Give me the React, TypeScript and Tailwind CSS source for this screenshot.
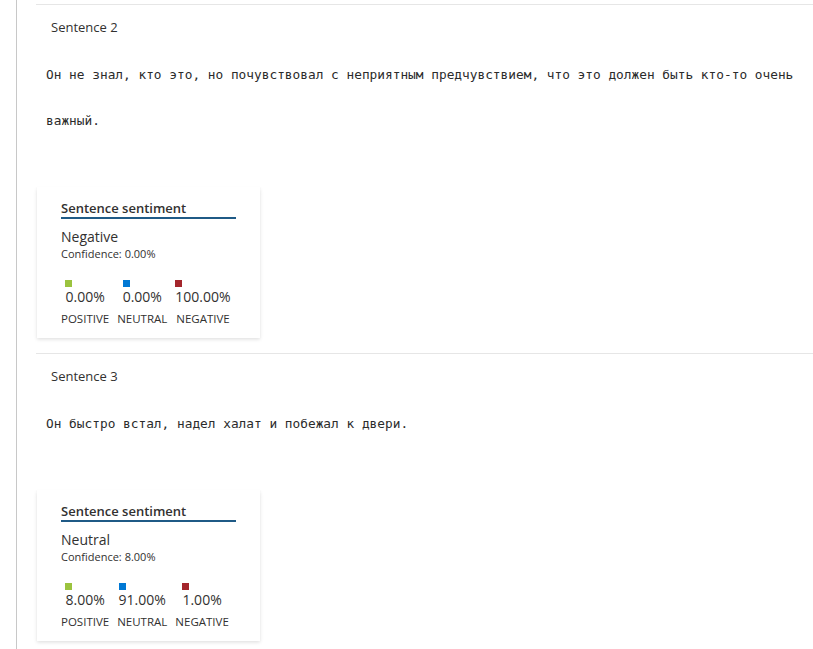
import React from "react";

type Scores = {
  positive: string;
  neutral: string;
  negative: string;
};

type Sentence = {
  index: number;
  text: string;
  label: string;
  confidence: string;
  scores: Scores;
};

const sentences: Sentence[] = [
  {
    index: 2,
    text: "Он не знал, кто это, но почувствовал с неприятным предчувствием, что это должен быть кто-то очень важный.",
    label: "Negative",
    confidence: "0.00%",
    scores: { positive: "0.00%", neutral: "0.00%", negative: "100.00%" },
  },
  {
    index: 3,
    text: "Он быстро встал, надел халат и побежал к двери.",
    label: "Neutral",
    confidence: "8.00%",
    scores: { positive: "8.00%", neutral: "91.00%", negative: "1.00%" },
  },
];

const ui = { fontFamily: '"Segoe UI", "Open Sans", "Noto Sans", sans-serif' };
const mono = { fontFamily: '"DejaVu Sans Mono", "Liberation Mono", monospace' };

function Score({ color, value, name }: { color: string; value: string; name: string }) {
  return (
    <div className="flex flex-col items-center">
      <div className="flex flex-col items-start">
        <span className={`w-[7px] h-[7px] ${color}`} />
        <span className="text-[14px] leading-[18px] mt-[1px]">{value}</span>
      </div>
      <span className="text-[11.5px] leading-[18px] mt-[4px] uppercase">{name}</span>
    </div>
  );
}

function SentimentCard({ s }: { s: Sentence }) {
  return (
    <div
      style={ui}
      className="ml-px w-[223px] bg-white px-6 pt-[13px] pb-[10px] text-[#323130] shadow-[0_1.6px_3.6px_rgba(0,0,0,0.13),0_0.3px_0.9px_rgba(0,0,0,0.11)]"
    >
      <div className="text-[13px] font-semibold leading-[17px] border-b-2 border-[#1f5a86]">
        Sentence sentiment
      </div>
      <div className="mt-2 text-[14px] leading-[20px]">{s.label}</div>
      <div className="text-[11px] leading-[14px]">Confidence: {s.confidence}</div>

      <div className="mt-[19px] flex gap-2">
        <Score color="bg-[#9bc33f]" value={s.scores.positive} name="Positive" />
        <Score color="bg-[#0078d4]" value={s.scores.neutral} name="Neutral" />
        <Score color="bg-[#a4262c]" value={s.scores.negative} name="Negative" />
      </div>
    </div>
  );
}

function SentenceBlock({ s }: { s: Sentence }) {
  return (
    <section className="border-t border-[#e6e6e6] pb-[15px]">
      <div style={ui} className="pl-[15px] pt-[12px] text-[13px] leading-[20px] text-[#323130]">
        Sentence {s.index}
      </div>

      <p
        style={mono}
        className="mt-[15px] pl-[10px] pr-[12px] text-[12.8px] leading-[46px] text-[#2b2b2b]"
      >
        {s.text}
      </p>

      <div className="mt-[43px]">
        <SentimentCard s={s} />
      </div>
    </section>
  );
}

export default function App() {
  return (
    <div className="min-h-screen bg-white flex">
      <div className="w-4 shrink-0" />
      <div className="w-px shrink-0 bg-[#c8c8c8]" />

      <main className="flex-1 pl-[19px] pt-1">
        {sentences.map((s) => (
          <SentenceBlock key={s.index} s={s} />
        ))}
      </main>
    </div>
  );
}
